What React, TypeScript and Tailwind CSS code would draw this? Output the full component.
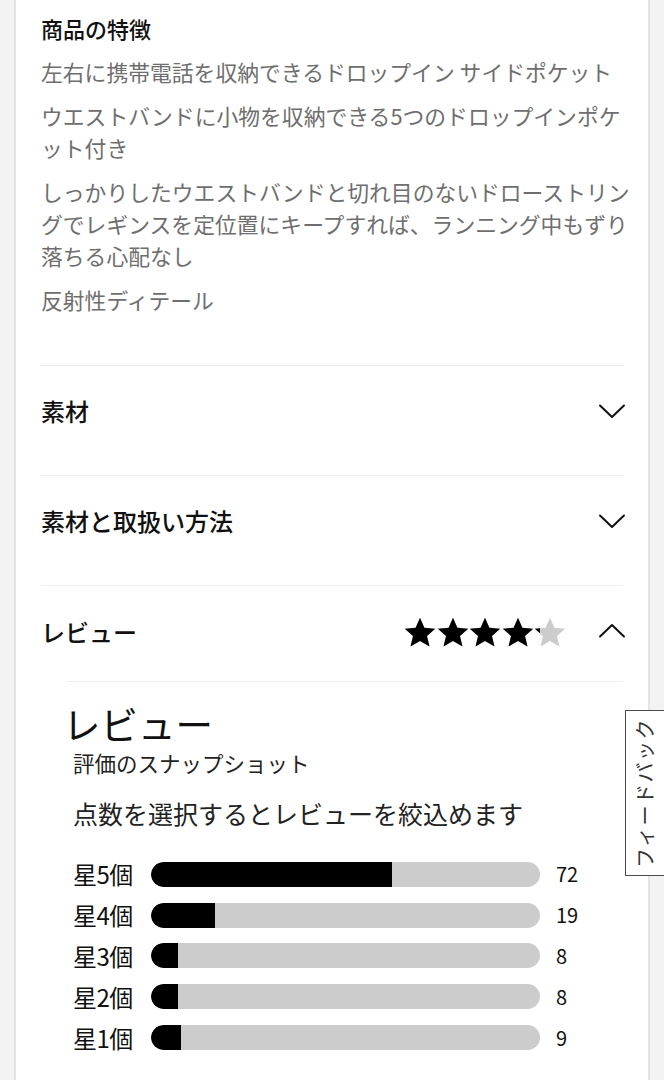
import React from 'react';

const features = [
  '左右に携帯電話を収納できるドロップイン サイドポケット',
  'ウエストバンドに小物を収納できる5つのドロップインポケット付き',
  'しっかりしたウエストバンドと切れ目のないドローストリングでレギンスを定位置にキープすれば、ランニング中もずり落ちる心配なし',
  '反射性ディテール',
];

const ratings = [
  { label: '星5個', count: 72 },
  { label: '星4個', count: 19 },
  { label: '星3個', count: 8 },
  { label: '星2個', count: 8 },
  { label: '星1個', count: 9 },
];

const total = ratings.reduce((s, r) => s + r.count, 0);
const average = ratings.reduce((s, r, i) => s + r.count * (5 - i), 0) / total;

const STAR_PATH =
  'M16 0.8l4.4 9.9 10.8 1-8.2 7.2 2.5 10.6L16 23.9 6.5 29.5 9 18.9 0.8 11.7l10.8-1z';

function Star({ fill }: { fill: number }) {
  return (
    <div className="relative w-[32px] h-[31px]">
      <svg viewBox="0 0 32 31" className="absolute inset-0 w-[32px] h-[31px]">
        <path d={STAR_PATH} fill="#cccccc" />
      </svg>
      <div className="absolute inset-y-0 left-0 overflow-hidden" style={{ width: `${fill * 100}%` }}>
        <svg viewBox="0 0 32 31" className="w-[32px] h-[31px]">
          <path d={STAR_PATH} fill="#000000" />
        </svg>
      </div>
    </div>
  );
}

function Chevron({ up = false }: { up?: boolean }) {
  return (
    <svg viewBox="0 0 28 15" className="w-[28px] h-[15px]" fill="none">
      <polyline
        points={up ? '2,13.5 14,2 26,13.5' : '2,1.5 14,13 26,1.5'}
        stroke="#111"
        strokeWidth="2"
        strokeLinecap="round"
        strokeLinejoin="round"
      />
    </svg>
  );
}

function AccordionRow({ title }: { title: string }) {
  return (
    <div className="border-t border-[#ececec] pt-[29px] pb-[48px] flex items-center justify-between">
      <span className="text-[24px] leading-[32px] font-medium text-[#111]">{title}</span>
      <span className="mr-[-3px]">
        <Chevron />
      </span>
    </div>
  );
}

export default function App() {
  return (
    <div className="relative min-h-screen bg-[#f3f3f3] px-[14px] font-['Noto_Sans_CJK_JP','Noto_Sans',sans-serif]">
      <div className="bg-white border-x-2 border-[#e4e4e4] px-[25px] min-h-screen">
        {/* 商品の特徴 */}
        <div className="pt-[14px] pb-[49px]">
          <h3 className="text-[22px] leading-[28px] font-medium text-[#111]">商品の特徴</h3>
          <ul className="mt-[14px] -mr-[12px] space-y-3">
            {features.map((f) => (
              <li key={f} className="text-[21.8px] leading-[32px] text-[#6e6e6e]">
                {f}
              </li>
            ))}
          </ul>
        </div>

        <AccordionRow title="素材" />
        <AccordionRow title="素材と取扱い方法" />

        {/* レビュー */}
        <div className="border-t border-[#ececec] pt-[29px] pb-[33px] flex items-center">
          <span className="flex-1 text-[24px] leading-[32px] font-medium text-[#111]">レビュー</span>
          <div className="flex gap-[0.5px] mr-[32px] mt-[2px]">
            {[0, 1, 2, 3, 4].map((i) => (
              <Star key={i} fill={Math.max(0, Math.min(1, average - i))} />
            ))}
          </div>
          <span className="mr-[-3px] mb-[2px]">
            <Chevron up />
          </span>
        </div>

        <div className="ml-[26px] border-t border-[#ececec] pt-[21px] pb-[30px]">
          <h2 className="-ml-[4px] text-[37.5px] leading-[40px] font-normal text-[#111]">レビュー</h2>
          <div className="ml-[6px]">
            <p className="mt-[7px] text-[21.5px] leading-[26px] text-[#222]">評価のスナップショット</p>
            <p className="mt-[21px] text-[25px] leading-[32px] text-[#222]">点数を選択するとレビューを絞込めます</p>
            <div className="mt-[25px]">
              {ratings.map((r) => (
                <div key={r.label} className="flex items-center h-[40.8px]">
                  <span className="w-[78px] text-[24px] leading-[30px] text-[#111] tracking-[-0.5px]">{r.label}</span>
                  <div className="w-[389px] h-[25px] rounded-full bg-[#cccccc] overflow-hidden">
                    <div
                      className="h-full bg-black rounded-l-full"
                      style={{ width: `${(r.count / total) * 100}%` }}
                    />
                  </div>
                  <span className="ml-[16px] text-[20px] leading-[28px] text-[#111]">{r.count}</span>
                </div>
              ))}
            </div>
          </div>
        </div>
      </div>

      {/* フィードバック tab */}
      <div className="absolute right-[-1px] top-[710px] w-[40px] h-[166px] bg-white border-[1.5px] border-[#4a4a4a] flex items-center justify-center">
        <span className="-rotate-90 whitespace-nowrap text-[20px] leading-none text-[#333] tracking-[1.5px]">
          フィードバック
        </span>
      </div>
    </div>
  );
}
